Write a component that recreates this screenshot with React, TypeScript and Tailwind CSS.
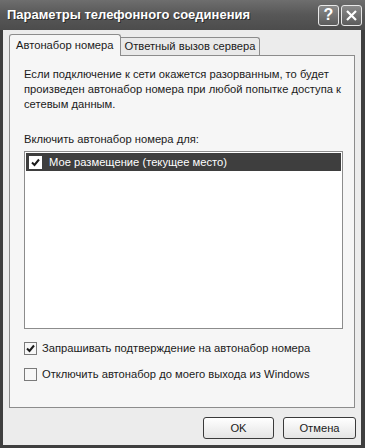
import React from 'react';

const ui = { fontFamily: '"Liberation Sans", Arial, sans-serif' };

function Check({ checked, dark }: { checked?: boolean; dark?: boolean }) {
  return (
    <div
      className={`w-[13px] h-[13px] flex items-center justify-center border ${
        dark ? 'border-white bg-white' : 'border-[#7a7a7a] bg-[#f7f7f7]'
      }`}
    >
      {checked && (
        <svg width="9" height="9" viewBox="0 0 9 9">
          <path d="M1 4.5 L3.5 7 L8 1.5" stroke="#1a1a1a" strokeWidth="2" fill="none" />
        </svg>
      )}
    </div>
  );
}

function TitleButton({ children }: { children: React.ReactNode }) {
  return (
    <div className="w-[21px] h-[21px] rounded-[3px] border border-[#e8e8e8] bg-gradient-to-b from-[#8a8a8a] to-[#5c5c5c] flex items-center justify-center">
      {children}
    </div>
  );
}

export default function App() {
  return (
    <div className="w-[365px] h-[448px] flex flex-col bg-[#3f3f3f] text-[#1a1a1a]" style={ui}>
      {/* title bar */}
      <div className="h-[30px] flex items-center pl-[7px] pr-[3px] bg-gradient-to-b from-[#6e6e6e] via-[#575757] to-[#4c4c4c]">
        <span
          className="flex-1 text-white font-bold text-[13px]"
          style={{ textShadow: '1px 1px 0 #2a2a2a' }}
        >
          Параметры телефонного соединения
        </span>
        <div className="flex gap-[2px]">
          <TitleButton>
            <span className="text-white font-bold text-[16px] leading-none">?</span>
          </TitleButton>
          <TitleButton>
            <svg width="13" height="13" viewBox="0 0 13 13">
              <path d="M2 2 L11 11 M11 2 L2 11" stroke="white" strokeWidth="2.2" />
            </svg>
          </TitleButton>
        </div>
      </div>

      {/* body */}
      <div className="flex-1 flex flex-col ml-[3px] mr-[4px] mb-[3px] bg-[#ececec] text-[11.2px]">
        {/* tabs */}
        <div className="flex items-end pl-[6px] pt-[4px] h-[25px]">
          <div className="h-[22px] px-[6px] flex items-center bg-[#f6f6f6] border border-b-0 border-[#8c8c8c] rounded-t-[3px] relative top-[1px] z-10">
            Автонабор номера
          </div>
          <div className="h-[18px] px-[4px] flex items-center bg-[#e9e9e9] border border-b-0 border-l-0 border-[#8c8c8c] rounded-tr-[3px]">
            Ответный вызов сервера
          </div>
        </div>

        {/* panel */}
        <div className="ml-[6px] mr-[6px] h-[353px] border border-[#8c8c8c] bg-[#f6f6f6] flex flex-col pl-[14px] pr-[11px] pt-[11px]">
          <p className="leading-[15px]">
            Если подключение к сети окажется разорванным, то будет произведен автонабор номера при любой попытке доступа к сетевым данным.
          </p>
          <p className="leading-[15px] mt-[20px]">Включить автонабор номера для:</p>
          <div className="mt-[4px] h-[178px] border border-[#8c8c8c] bg-white p-[1px]">
            <div className="h-[18px] bg-[#3e3e3e] flex items-center gap-[7px] pl-[3px] text-white">
              <Check checked dark />
              <span>Мое размещение (текущее место)</span>
            </div>
          </div>
          <div className="mt-[12px] flex items-center gap-[5px] h-[14px]">
            <Check checked />
            <span>Запрашивать подтверждение на автонабор номера</span>
          </div>
          <div className="mt-[12px] flex items-center gap-[5px] h-[14px]">
            <Check />
            <span>Отключить автонабор до моего выхода из Windows</span>
          </div>
        </div>

        {/* buttons */}
        <div className="flex justify-end gap-[9px] mt-[9px] mr-[5px]">
          <button className="w-[71px] h-[22px] rounded-[3px] border border-[#3a3a3a] bg-gradient-to-b from-white to-[#e4e4e4]">
            OK
          </button>
          <button className="w-[73px] h-[22px] rounded-[3px] border border-[#3a3a3a] bg-gradient-to-b from-white to-[#e4e4e4]">
            Отмена
          </button>
        </div>
      </div>
    </div>
  );
}
